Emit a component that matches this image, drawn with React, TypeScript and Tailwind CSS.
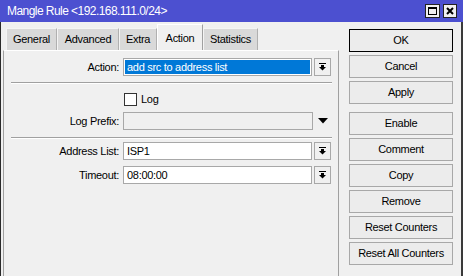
import React from "react";

const DropIcon = () => (
  <svg width="7" height="8" viewBox="0 0 7 8" fill="#000">
    <rect x="0" y="0" width="7" height="1" />
    <rect x="2" y="2" width="3" height="2" />
    <polygon points="0,4 7,4 3.5,7.5" />
  </svg>
);

const DropBtn = () => (
  <div className="ml-[2px] w-[17px] h-[18px] border border-[#a8a8a8] bg-[#f0f0f0] flex items-center justify-center">
    <DropIcon />
  </div>
);

const Label = ({ children }: { children: React.ReactNode }) => (
  <div className="w-[116px] pr-[1px] text-right text-black">{children}</div>
);

const Sep = () => (
  <div className="ml-[7px] w-[321px] h-px bg-[#a0a0a0] border-b border-white box-content" />
);

const tabs = [
  { name: "General", w: "w-[51px]" },
  { name: "Advanced", w: "w-[62px]" },
  { name: "Extra", w: "w-[38px]" },
  { name: "Action", w: "w-[46px]", active: true },
  { name: "Statistics", w: "w-[55px]" },
];

const buttons = [
  "Cancel",
  "Apply",
];
const buttons2 = ["Enable", "Comment", "Copy", "Remove", "Reset Counters", "Reset All Counters"];

export default function App() {
  return (
    <div className="w-[463px] h-[276px] flex flex-col bg-[#f0f0f0] overflow-hidden font-['Liberation_Sans',Arial,sans-serif] text-[11px] tracking-[-0.3px] text-black">
      {/* Title bar */}
      <div className="h-[22px] shrink-0 bg-[#4c50d0] flex items-center pl-[7px] pr-[6px]">
        <div className="text-white text-[12px] tracking-[-0.55px] flex-1">Mangle Rule &lt;192.168.111.0/24&gt;</div>
        <div className="w-[15px] h-[14px] border border-[#222] bg-[#f0f0f0] flex items-center justify-center">
          <div className="w-[9px] h-[8px] border border-black border-t-2" />
        </div>
        <div className="ml-[3px] w-[14px] h-[14px] border border-[#222] bg-[#f0f0f0] flex items-center justify-center">
          <svg width="8" height="8" viewBox="0 0 8 8">
            <path d="M1 1 L7 7 M7 1 L1 7" stroke="#000" strokeWidth="2" />
          </svg>
        </div>
      </div>

      {/* Body */}
      <div className="flex-1 flex border-l border-[#2a2a2a] border-r-2 border-r-[#3a3a3a] min-h-0">
        {/* Left column */}
        <div className="ml-[2px] w-[336px] flex flex-col">
          {/* Tabs */}
          <div className="h-[28px] shrink-0 flex items-end pl-[3px]">
            {tabs.map((t) =>
              t.active ? (
                <div
                  key={t.name}
                  className={`${t.w} h-[26px] bg-[#f0f0f0] border-t border-l border-white border-r border-r-[#a0a0a0] flex items-start justify-center pt-[5px]`}
                >
                  {t.name}
                </div>
              ) : (
                <div
                  key={t.name}
                  className={`${t.w} h-[22px] bg-[#d9d9d9] border-t border-l border-[#f4f4f4] border-r border-r-[#b0b0b0] flex items-center justify-center`}
                >
                  {t.name}
                </div>
              )
            )}
          </div>
          {/* Panel */}
          <div className="flex-1 border-t border-white border-l border-l-[#a0a0a0] border-r border-r-[#a0a0a0] flex flex-col">
            {/* Action row */}
            <div className="mt-[7px] h-[18px] flex items-center">
              <Label>Action:</Label>
              <div className="ml-[3px] w-[189px] h-[18px] border border-[#a8a8a8] bg-white p-[1px]">
                <div className="h-full bg-[#0078d7] text-white pl-[2px] flex items-center">add src to address list</div>
              </div>
              <DropBtn />
            </div>
            <div className="mt-[6px]">
              <Sep />
            </div>
            {/* Log */}
            <div className="mt-[9px] h-[13px] flex items-center">
              <div className="ml-[120px] w-[13px] h-[13px] border border-[#333] bg-white" />
              <div className="ml-[4px]">Log</div>
            </div>
            {/* Log Prefix */}
            <div className="mt-[6px] h-[18px] flex items-center">
              <Label>Log Prefix:</Label>
              <div className="ml-[3px] w-[190px] h-[18px] border border-[#a8a8a8] bg-[#f0f0f0]" />
              <div className="ml-[5px] flex items-center">
                <svg width="10" height="6" viewBox="0 0 10 6">
                  <polygon points="0,0 10,0 5,5.5" fill="#000" />
                </svg>
              </div>
            </div>
            <div className="mt-[7px]">
              <Sep />
            </div>
            {/* Address List */}
            <div className="mt-[3px] h-[18px] flex items-center">
              <Label>Address List:</Label>
              <div className="ml-[3px] w-[189px] h-[18px] border border-[#a8a8a8] bg-white pl-[3px] flex items-center">ISP1</div>
              <DropBtn />
            </div>
            {/* Timeout */}
            <div className="mt-[6px] h-[18px] flex items-center">
              <Label>Timeout:</Label>
              <div className="ml-[3px] w-[189px] h-[18px] border border-[#a8a8a8] bg-white pl-[3px] flex items-center">08:00:00</div>
              <DropBtn />
            </div>
          </div>
        </div>

        {/* Right column */}
        <div className="ml-[10px] w-[104px] pt-[7px] flex flex-col">
          <div className="h-[23px] border border-black bg-[#ececec] flex items-center justify-center">OK</div>
          {buttons.map((b) => (
            <div key={b} className="mt-[3px] h-[23px] border border-[#a8a8a8] bg-[#ececec] flex items-center justify-center">
              {b}
            </div>
          ))}
          <div className="h-[5px]" />
          {buttons2.map((b) => (
            <div key={b} className="mt-[3px] h-[23px] border border-[#a8a8a8] bg-[#ececec] flex items-center justify-center">
              {b}
            </div>
          ))}
        </div>
      </div>
    </div>
  );
}
